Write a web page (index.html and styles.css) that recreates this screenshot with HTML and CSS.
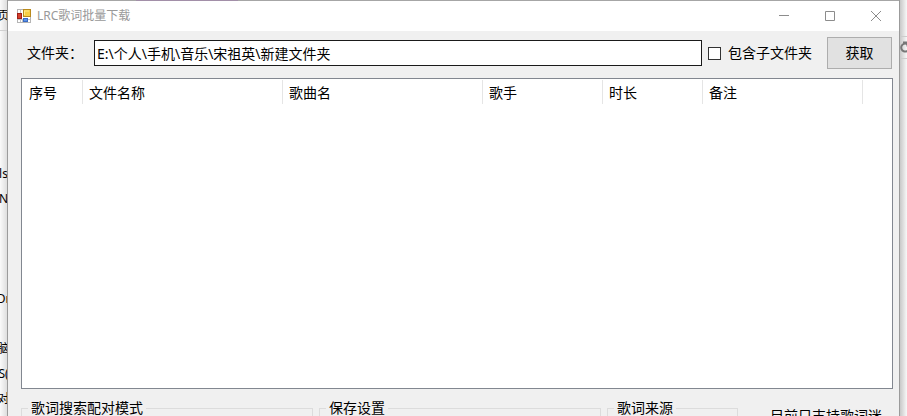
FILE: index.html
```html
<!DOCTYPE html>
<html lang="zh-CN">
<head>
    <meta charset="utf-8" />
    <title>LRC歌词批量下载</title>
    <link rel="stylesheet" href="styles.css">
</head>
<body>
    <div class="behind left">
        <div class="tab">页</div>
        <div class="bar"></div>
        <ul class="files">
            <li>ls</li>
            <li>N</li>
            <li></li>
            <li></li>
            <li></li>
            <li>Dr</li>
            <li></li>
            <li>脑</li>
            <li>S(</li>
            <li>对</li>
        </ul>
    </div>

    <main class="window">
        <div class="edge"></div>
        <header class="titlebar">
            <svg class="appicon" width="14" height="14" viewBox="0 0 14 14">
                <rect x="0.5" y="0.5" width="13" height="13" fill="#fff" stroke="#b5b5b5" />
                <path d="M3.5 1v12M1 10.500h12M5.500 10v3" stroke="#c4c4c4" fill="none" />
                <rect x="6.500" y="0.500" width="7" height="7" fill="#f7cf45" stroke="#b98a1d" />
                <path d="M7 2h5M7.500 2v4" stroke="#ffe98c" fill="none" />
                <rect x="0.500" y="4.500" width="4" height="5" fill="#d4402c" stroke="#a01f16" />
                <rect x="6.500" y="9.500" width="4" height="3" fill="#5b93e8" stroke="#3a6bc4" />
            </svg>
            <h1>LRC歌词批量下载</h1>
            <button class="winbtn" aria-label="最小化">
                <svg width="12" height="12" viewBox="0 0 12 12"><path d="M1 5.500h10" /></svg>
            </button>
            <button class="winbtn" aria-label="最大化">
                <svg width="12" height="12" viewBox="0 0 12 12"><path d="M1.500 1.500h9v9h-9z" /></svg>
            </button>
            <button class="winbtn" aria-label="关闭">
                <svg width="12" height="12" viewBox="0 0 12 12"><path d="M1 1l10 10M11 1L1 11" /></svg>
            </button>
        </header>

        <form class="folder">
            <label class="folder-label" for="path">文件夹：</label>
            <input class="path" id="path" type="text" value="E:\个人\手机\音乐\宋祖英\新建文件夹" />
            <input class="check" id="sub" type="checkbox" />
            <label class="sub-label" for="sub">包含子文件夹</label>
            <button class="get" type="button">获取</button>
        </form>

        <div class="list">
            <table>
                <thead>
                    <tr>
                        <th class="w-no">序号</th>
                        <th class="w-name">文件名称</th>
                        <th class="w-name">歌曲名</th>
                        <th class="w-singer">歌手</th>
                        <th class="w-time">时长</th>
                        <th class="w-note">备注</th>
                    </tr>
                </thead>
            </table>
        </div>

        <div class="options">
            <fieldset class="match"><legend>歌词搜索配对模式</legend></fieldset>
            <fieldset class="save"><legend>保存设置</legend></fieldset>
            <fieldset class="source"><legend>歌词来源</legend></fieldset>
            <p class="note">目前只支持歌词迷</p>
        </div>
    </main>

    <div class="behind right">
        <div class="tab"></div>
        <div class="refresh">
            <svg width="12" height="14" viewBox="0 0 12 14"><path d="M7 3A4 4 0 1 0 9 8M3 1.500h4.500v4" fill="none" stroke="#777" stroke-width="2" /></svg>
        </div>
    </div>
</body>
</html>
```

FILE: styles.css
```css
* {
    box-sizing: border-box;
}

body {
    margin: 0;
    height: 100vh;
    display: flex;
    overflow: hidden;
    background-color: #fff;
    color: #000;
    font-family: "Noto Sans", "Noto Sans CJK SC", sans-serif;
    font-size: 14px;
    line-height: 20px;
}

button, input {
    font: inherit;
    color: inherit;
}

/* the page under the window */
.behind {
    flex: none;
    width: 7px;
    overflow: hidden;
    font-size: 12px;
}

.left {
    background: linear-gradient(to right, #fafafa, #dedede);
}

.right {
    background: linear-gradient(to right, #c8c8c8, #f8f8f8);
}

.tab {
    height: 31px;
    padding-top: 6px;
    display: flex;
    justify-content: center;
    border-bottom: 1px solid #d0d0d0;
}

.right .tab {
    border-bottom: none;
}

.bar {
    height: 130px;
}

.files {
    margin: 0;
    padding: 0;
    list-style: none;
}

.files li {
    height: 25px;
    line-height: 25px;
    display: flex;
    justify-content: center;
    white-space: nowrap;
}

.refresh {
    height: 23px;
    margin-top: 5px;
    padding: 4px 0 0 0;
    border: solid #ccc;
    border-width: 1px 0;
}

.window {
    flex: 1;
    min-width: 0;
    display: flex;
    flex-direction: column;
    background-color: #f0f0f0;
    border: solid #9b9b9b;
    border-width: 0 1px;
}

/* top border, tinted where the coloured tab lies under it */
.edge {
    flex: none;
    height: 1px;
    background: linear-gradient(to right, #a6a6a6 128px, #a28fa8 128px, #a28fa8 230px, #a6a6a6 230px);
}

.titlebar {
    height: 30px;
    padding-left: 9px;
    display: flex;
    align-items: center;
    background-color: #fff;
}

.titlebar h1 {
    flex: 1;
    margin: 0 0 0 6px;
    font-size: 12px;
    font-weight: normal;
    color: #999;
}

.winbtn {
    width: 46px;
    height: 30px;
    padding: 0;
    display: flex;
    align-items: center;
    justify-content: center;
    background: none;
    border: none;
}

.winbtn path {
    fill: none;
    stroke: #8c8c8c;
}

.folder {
    display: flex;
    align-items: center;
    padding: 6px 7px 0 19px;
}

.folder-label {
    width: 67px;
    white-space: nowrap;
}

.path {
    flex: 1;
    min-width: 0;
    height: 26px;
    padding: 0 2px;
    background-color: #fff;
    border: 1px solid #1a1a1a;
    border-radius: 0;
}

.check {
    appearance: none;
    width: 13px;
    height: 13px;
    margin: 0 7px 0 6px;
    background-color: #fff;
    border: 1px solid #333;
}

.check:checked {
    background-color: #333;
}

.sub-label {
    margin-right: 15px;
}

.get {
    width: 65px;
    height: 32px;
    padding: 0;
    background-color: #e1e1e1;
    border: 1px solid #adadad;
}

.list {
    flex: 1;
    min-height: 0;
    margin: 9px 6px 0 13px;
    padding: 1px 1px 0;
    overflow: hidden;
    background-color: #fff;
    border: 1px solid #828790;
}

table {
    table-layout: fixed;
    width: 840px;
    border-collapse: separate;
    border-spacing: 0;
}

th {
    height: 24px;
    padding: 2px 0 0 6px;
    text-align: left;
    font-weight: normal;
    border-right: 1px solid #e5e5e5;
}

.w-no {
    width: 60px;
}

.w-name {
    width: 200px;
}

.w-singer {
    width: 120px;
}

.w-time {
    width: 100px;
}

.w-note {
    width: 160px;
}

/* group boxes run on below the visible part */
.options {
    flex: none;
    height: 27px;
    display: flex;
    gap: 6px;
    padding: 9px 6px 0 13px;
    overflow: hidden;
}

fieldset {
    height: 80px;
    margin: 0;
    padding: 0 6px;
    border: 1px solid #dcdcdc;
}

legend {
    padding: 0 3px;
    white-space: nowrap;
}

.match {
    width: 292px;
}

.save {
    width: 282px;
}

.source {
    width: 131px;
}

.note {
    margin: 8px 0 0 26px;
    white-space: nowrap;
}
```
